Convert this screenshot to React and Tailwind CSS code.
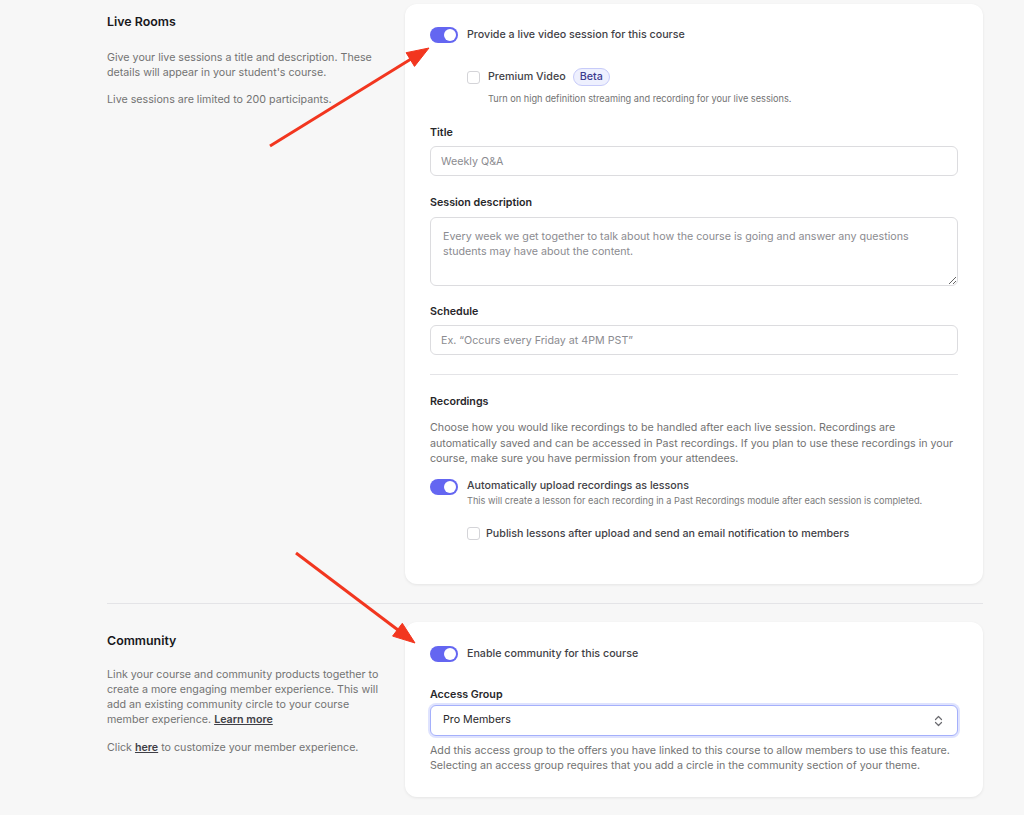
import React from "react"

function Toggle() {
  return (
    <span className="relative inline-flex h-[16px] w-[28px] shrink-0 items-center rounded-full bg-[#6466f1]">
      <span className="absolute right-[2px] h-[12px] w-[12px] rounded-full bg-white" />
    </span>
  )
}

function Checkbox() {
  return <span className="inline-block h-[13px] w-[13px] shrink-0 rounded-[3px] border border-[#d4d4d8] bg-white" />
}

function Label({ children, className = "" }) {
  return <div className={`text-[10.7px] leading-[14px] font-semibold text-[#27272a] ${className}`}>{children}</div>
}

function Field({ placeholder }) {
  return (
    <input
      placeholder={placeholder}
      className="mt-[6px] block h-[30px] w-full rounded-[6px] border border-[#dcdcdf] bg-white px-[10px] text-[10.7px] text-[#27272a] placeholder:text-[#8b8b90] outline-none"
    />
  )
}

function Arrows() {
  return (
    <svg className="pointer-events-none absolute left-0 top-0" width="1024" height="815" viewBox="0 0 1024 815">
      <g fill="#f2361f" stroke="#f2361f">
        <line x1="270" y1="146" x2="411" y2="59" strokeWidth="3" />
        <polygon points="429,48 414.5,66.4 406.1,52.7" strokeWidth="1" />
        <line x1="296" y1="553" x2="398" y2="630" strokeWidth="3" />
        <polygon points="415,643 392.6,636.1 402.3,623.3" strokeWidth="1" />
      </g>
    </svg>
  )
}

export default function App() {
  return (
    <div className="relative h-[815px] w-[1024px] overflow-hidden bg-[#f7f7f7] pl-[107px] pr-[41px] pt-[4px]" style={{ fontFamily: "Inter, 'Noto Sans', sans-serif" }}>

      {/* Live rooms */}
      <div className="grid grid-cols-[298px_1fr]">
        <div className="pr-[20px] pt-[10px]">
          <h2 className="text-[12.4px] leading-[16px] font-semibold text-[#18181b]">Live Rooms</h2>
          <p className="mt-[20px] text-[10.7px] leading-[15px] text-[#737373]">
            Give your live sessions a title and description. These details will appear in your student's course.
          </p>
          <p className="mt-[12px] text-[10.7px] leading-[15px] text-[#737373]">
            Live sessions are limited to 200 participants.
          </p>
        </div>

        <div className="h-[580px] rounded-[12px] bg-white px-[25px] pt-[23px] shadow-[0_1px_3px_rgba(0,0,0,0.08)]">
          <div className="flex items-center gap-[9px]">
            <Toggle />
            <span className="text-[10.7px] leading-[16px] font-medium text-[#3f3f46]">Provide a live video session for this course</span>
          </div>

          <div className="mt-[25px] pl-[37px]">
            <div className="flex h-[18px] items-center">
              <Checkbox />
              <span className="ml-[8px] text-[10.7px] font-medium text-[#3f3f46]">Premium Video</span>
              <span className="ml-[7px] rounded-full border border-[#c7cbf9] bg-[#eef0fe] px-[6px] text-[10.7px] leading-[16px] font-medium text-[#3b3a8f]">Beta</span>
            </div>
            <div className="mt-[7px] pl-[21px] text-[9.2px] leading-[12px] text-[#737373]">
              Turn on high definition streaming and recording for your live sessions.
            </div>
          </div>

          <Label className="mt-[21px]">Title</Label>
          <Field placeholder="Weekly Q&A" />

          <Label className="mt-[20px]">Session description</Label>
          <textarea
            placeholder="Every week we get together to talk about how the course is going and answer any questions students may have about the content."
            className="mt-[7px] block h-[69px] w-full rounded-[6px] border border-[#dcdcdf] bg-white px-[12px] py-[11px] text-[10.7px] leading-[15px] placeholder:text-[#8b8b90] outline-none"
          />

          <Label className="mt-[19px]">Schedule</Label>
          <Field placeholder="Ex. “Occurs every Friday at 4PM PST”" />

          <div className="mt-[19px] h-px bg-[#e4e4e7]" />

          <Label className="mt-[20px] font-medium">Recordings</Label>
          <p className="mt-[11px] text-[10.7px] leading-[15.5px] text-[#737373]">
            Choose how you would like recordings to be handled after each live session. Recordings are automatically saved and can be accessed in Past recordings. If you plan to use these recordings in your course, make sure you have permission from your attendees.
          </p>

          <div className="mt-[12px] flex items-start gap-[9px]">
            <Toggle />
            <div>
              <div className="text-[10.7px] leading-[14px] font-medium text-[#3f3f46]">Automatically upload recordings as lessons</div>
              <div className="mt-[2px] text-[9.2px] leading-[12px] text-[#7a7a7a]">This will create a lesson for each recording in a Past Recordings module after each session is completed.</div>
            </div>
          </div>

          <div className="mt-[20px] flex items-center gap-[6px] pl-[37px]">
            <Checkbox />
            <span className="text-[10.7px] leading-[14px] font-medium text-[#3f3f46]">Publish lessons after upload and send an email notification to members</span>
          </div>
        </div>
      </div>

      <div className="mt-[19px] h-px bg-[#e4e4e7]" />

      {/* Community */}
      <div className="mt-[18px] grid grid-cols-[298px_1fr]">
        <div className="pr-[18px] pt-[11px]">
          <h2 className="text-[12.4px] leading-[16px] font-semibold text-[#18181b]">Community</h2>
          <p className="mt-[18px] text-[10.7px] leading-[15px] text-[#737373]">
            Link your course and community products together to create a more engaging member experience. This will add an existing community circle to your course member experience.{" "}
            <a className="font-semibold text-[#3f3f46] underline">Learn more</a>
          </p>
          <p className="mt-[13px] text-[10.7px] leading-[15px] text-[#737373]">
            Click <a className="font-semibold text-[#3f3f46] underline">here</a> to customize your member experience.
          </p>
        </div>

        <div className="rounded-[12px] bg-white px-[25px] pb-[24px] pt-[24px] shadow-[0_1px_3px_rgba(0,0,0,0.08)]">
          <div className="flex items-center gap-[9px]">
            <Toggle />
            <span className="text-[10.7px] leading-[16px] font-medium text-[#3f3f46]">Enable community for this course</span>
          </div>

          <Label className="mt-[26px] font-medium">Access Group</Label>
          <div className="mt-[3px] flex h-[31px] items-center justify-between rounded-[6px] border border-[#a5b0fb] bg-white pl-[12px] pr-[14px] ring-2 ring-[#dfe3fe]">
            <span className="text-[10.7px] text-[#27272a]">Pro Members</span>
            <svg width="9" height="12" viewBox="0 0 9 12" fill="none" stroke="#6b6b70" strokeWidth="1.2" strokeLinecap="round" strokeLinejoin="round">
              <path d="M1.5 4.5L4.5 1.5L7.5 4.5" />
              <path d="M1.5 7.5L4.5 10.5L7.5 7.5" />
            </svg>
          </div>
          <p className="mt-[7px] text-[10.7px] leading-[15px] text-[#737373]">
            Add this access group to the offers you have linked to this course to allow members to use this feature. Selecting an access group requires that you add a circle in the community section of your theme.
          </p>
        </div>
      </div>

      <Arrows />
    </div>
  )
}
